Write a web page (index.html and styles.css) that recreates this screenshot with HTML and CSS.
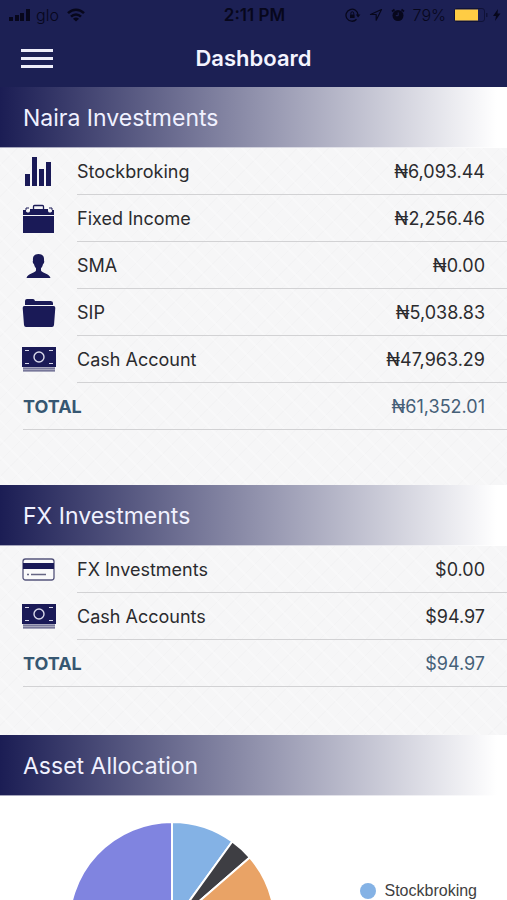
FILE: index.html
```html
<!DOCTYPE html>
<html lang="en">
<head>
<meta charset="utf-8">
<meta name="viewport" content="width=device-width, initial-scale=1">
<title>Dashboard</title>
<link rel="stylesheet" href="styles.css">
</head>
<body>
<svg class="defs" aria-hidden="true">
  <symbol id="cash" viewBox="0 0 34 26">
    <path fill="#1a1a57" d="M0 0h34v20H0z"/>
    <path stroke="#d9d9ea" stroke-width="1.2" d="M3 3.500h4M27 3.500h4M3 16.500h4M27 16.500h4"/>
    <circle cx="17" cy="10" r="5" fill="none" stroke="#d9d9ea" stroke-width="1.400"/>
    <path fill="#a5a5bb" d="M1 20h32v5H1z"/>
    <path stroke="#77779a" d="M1 21.500h32M1 23.500h32"/>
  </symbol>
</svg>
<div class="app">
  <header class="top">
    <div class="status">
      <div class="status-left">
        <svg width="24" height="14" viewBox="0 0 24 14"><path d="M1 9h4v4H1zM7 7h4v6H7zM12 5h4v8h-4zM18 1h4v12h-4z"/></svg>
        <span class="thin">glo</span>
        <svg class="wifi" width="18" height="14" viewBox="0 0 18 14"><path fill="none" stroke="#07071c" stroke-width="2.500" d="M1 5.200c4.600-4.600 11.400-4.600 16 0M4 8.700c2.900-2.900 7.100-2.900 10 0"/><path d="M9 13.500 6 10.700c1.700-1.600 4.300-1.600 6 0z"/></svg>
      </div>
      <span class="time">2:11 PM</span>
      <div class="status-right">
        <svg width="16" height="14" viewBox="0 0 16 14"><path fill="none" stroke="#07071c" stroke-width="1.300" d="M11.500 11.200A6 6 0 1 1 13 7"/><path d="M10.800 6.500h4.600L13.100 9.500zM5 6.500h4.600v3.600H5z"/><path fill="none" stroke="#07071c" d="M5.900 6.500V5.200a1.400 1.400 0 0 1 2.800 0v1.300"/></svg>
        <svg width="14" height="14" viewBox="0 0 14 14"><path fill="none" stroke="#07071c" stroke-width="1.200" stroke-linejoin="round" d="M12.500 1.500 1.500 6.500h5.700v5.700z"/></svg>
        <svg width="14" height="14" viewBox="0 0 14 14"><circle cx="7" cy="7.500" r="5.500"/><path stroke="#07071c" stroke-width="1.800" d="m1 3.500 2.500-2M13 3.500l-2.500-2"/><path fill="none" stroke="#1e2255" d="M7.200 4.500v3.200H4.800"/></svg>
        <span class="thin">79%</span>
        <svg class="battery" width="34" height="14" viewBox="0 0 34 14"><rect x=".500" y=".500" width="30" height="13" rx="2.500" fill="none" stroke="#101238"/><path fill="#fc4" d="M1 1.500h23v11H1z"/><path fill="#101238" d="M32 5h1.500v4H32z"/></svg>
        <svg width="9" height="14" viewBox="0 0 9 14"><path d="M6 1 1 8h3L3 13l5.500-7.500h-3z"/></svg>
      </div>
    </div>
    <nav class="bar">
      <button class="menu" type="button" aria-label="Menu"><i></i><i></i><i></i></button>
      <h1>Dashboard</h1>
    </nav>
  </header>
  <main>
    <section>
      <h2>Naira Investments</h2>
      <ul>
        <li><svg class="icon" viewBox="0 0 34 30"><path fill="#1a1a57" d="M3 17h5v12H3zM10 0h5v29h-5zM17 12h5v17h-5zM24 5h5v24h-5z"/></svg><div class="entry"><span>Stockbroking</span><span>₦6,093.44</span></div></li>
        <li><svg class="icon" viewBox="0 0 34 30"><path fill="none" stroke="#1a1a57" stroke-width="1.300" d="M11.500 5V2.500q0-1 1-1h8q1 0 1 1V5"/><path fill="#1a1a57" d="M1 6h3a2 2 0 0 0 4 1V5h18v2a2 2 0 0 0 4-1h2v5H1zM1 12h31v17H1z"/><path fill="none" stroke="#1a1a57" d="M4 6V4h3M27 4h3v2"/></svg><div class="entry"><span>Fixed Income</span><span>₦2,256.46</span></div></li>
        <li><svg class="icon" viewBox="0 0 34 30"><path fill="#1a1a57" d="M16.500 3c-4 0-6 2.300-5.500 6.500-.700 1 0 3.200 1 3.800.4 2 1.300 3.200 2 4v2.200c-.5 2.500-8.500 2.800-9.500 7.500h24c-1-4.700-9-5-9.500-7.500v-2.200c.8-.8 1.600-2 2-4 1-.6 1.700-2.800 1-3.800C22.500 5.300 20.500 3 16.500 3z"/></svg><div class="entry"><span>SMA</span><span>₦0.00</span></div></li>
        <li><svg class="icon" viewBox="0 0 34 30"><path fill="#1a1a57" d="M3 7V3q0-2 2-2h6q1.500 0 2 2h15.500Q31 3 31 5v2zM2.500 8h29q2 0 1.800 2l-1.300 17q-.2 2-2 2H4q-1.800 0-2-2L.7 10q-.2-2 1.800-2z"/></svg><div class="entry"><span>SIP</span><span>₦5,038.83</span></div></li>
        <li><svg class="icon" viewBox="0 -2 34 30"><use href="#cash" width="34" height="26"/></svg><div class="entry"><span>Cash Account</span><span>₦47,963.29</span></div></li>
        <li class="total"><div class="entry"><strong>TOTAL</strong><span>₦61,352.01</span></div></li>
      </ul>
    </section>
    <section>
      <h2>FX Investments</h2>
      <ul>
        <li><svg class="icon" viewBox="0 0 34 30"><rect x="1" y="4" width="31" height="21" rx="2.500" fill="#fafafa" stroke="#55557c" stroke-width="1.300"/><path fill="#1a1a57" d="M1 8h31v6H1z"/><path stroke="#666683" stroke-width="1.300" d="M5 19.500h2M9 19.500h15"/></svg><div class="entry"><span>FX Investments</span><span>$0.00</span></div></li>
        <li><svg class="icon" viewBox="0 -2 34 30"><use href="#cash" width="34" height="26"/></svg><div class="entry"><span>Cash Accounts</span><span>$94.97</span></div></li>
        <li class="total"><div class="entry"><strong>TOTAL</strong><span>$94.97</span></div></li>
      </ul>
    </section>
    <section class="allocation">
      <h2>Asset Allocation</h2>
      <div class="chart">
        <svg class="pie" width="208" height="208" viewBox="-104 -104 208 208" role="img" aria-label="Asset allocation pie chart">
          <g stroke="#fff" stroke-width="2" stroke-linejoin="round">
            <path fill="#84b2e5" d="M0 0V-103A103 103 0 0 1 60.300-83.500z"/>
            <path fill="#3e3e43" d="M0 0 60.300-83.500A103 103 0 0 1 77.700-67.600z"/>
            <path fill="#e9a366" d="M0 0 77.700-67.600A103 103 0 0 1 101-20.400z"/>
            <path fill="#8084e0" d="M0 0 101-20.400A103 103 0 1 1 0-103z"/>
          </g>
        </svg>
        <div class="legend"><i></i><span>Stockbroking</span></div>
      </div>
    </section>
  </main>
</div>
</body>
</html>
```
FILE: styles.css
```css
* {
  box-sizing: border-box;
}

body {
  margin: 0;
  font-family: Inter, "Liberation Sans", sans-serif;
  font-size: 18px;
  color: #2b2b2e;
}

h1, h2, ul {
  margin: 0;
  padding: 0;
}

svg {
  display: block;
  flex: none;
}

.defs {
  position: absolute;
  width: 0;
  height: 0;
}

.app {
  display: flex;
  flex-direction: column;
  height: 100vh;
}

.top {
  flex: none;
  background: #1c2054;
}

.status {
  display: grid;
  grid-template-columns: 1fr auto 1fr;
  align-items: center;
  height: 29px;
  padding: 0 6px 0 8px;
  font-size: 16px;
  color: #07071c;
}

.status svg {
  fill: #07071c;
}

.status-left,
.status-right {
  display: flex;
  align-items: center;
  gap: 4px;
}

.status-right {
  justify-content: flex-end;
  gap: 8px;
}

.status-right .battery {
  margin-right: -4px;
}

.wifi {
  margin-left: 4px;
}

.thin {
  font-weight: 300;
}

.time {
  font-size: 17px;
  font-weight: 600;
}

.bar {
  display: grid;
  grid-template-columns: 1fr auto 1fr;
  align-items: center;
  height: 58px;
  padding: 0 21px;
}

.menu {
  display: flex;
  flex-direction: column;
  gap: 5px;
  width: 32px;
  padding: 0;
  border: 0;
  background: none;
}

.menu i {
  width: 100%;
  height: 3px;
  background: #eeeefa;
}

h1 {
  font-size: 22px;
  font-weight: 600;
  line-height: 28px;
  color: #f4f4ff;
}

main {
  display: flex;
  flex: 1;
  flex-direction: column;
  min-height: 0;
  overflow-y: auto;
  scrollbar-width: none;
  background:
    repeating-linear-gradient(45deg, #fff4 0 2px, #fff0 2px 13px),
    repeating-linear-gradient(135deg, #e9e9eb33 0 1px, #fff0 1px 11px),
    #f6f6f7;
}

section {
  flex: none;
  padding-bottom: 55px;
}

section + section {
  padding-bottom: 48px;
}

h2 {
  padding: 2px 23px 0;
  border-bottom: 1px solid #ffffff99;
  background: linear-gradient(90deg, #1b1d54, #fff 98%);
  font-size: 23px;
  font-weight: 400;
  line-height: 58px;
  color: #f0f1ff;
}

ul {
  list-style: none;
}

li {
  display: flex;
  align-items: center;
  gap: 21px;
  padding-left: 22px;
}

.icon {
  width: 34px;
  height: 30px;
}

.entry {
  display: flex;
  flex: 1;
  justify-content: space-between;
  padding: 2px 22px 0 0;
  border-bottom: 1px solid #d2d2d4;
  line-height: 44px;
}

.total {
  padding-left: 23px;
  color: #456078;
}

.total strong {
  font-weight: 700;
  color: #365772;
}

.allocation {
  background: #fff;
}

.chart {
  display: flex;
  justify-content: space-between;
  padding: 25px 30px 0 68px;
}

.legend {
  display: flex;
  align-items: center;
  gap: 9px;
  height: 30px;
  margin-top: 55px;
  font-family: "Liberation Sans", Arial, sans-serif;
  font-size: 16px;
  color: #3f3f42;
}

.legend i {
  width: 16px;
  height: 16px;
  border-radius: 50%;
  background: #84b2e5;
}
```
